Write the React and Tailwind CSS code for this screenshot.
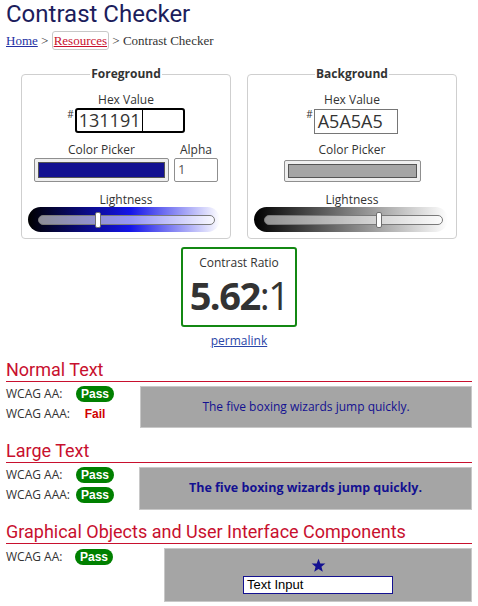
import React from 'react';

const FG = '#131191';

const Slider = ({ gradient, thumb, width }) => (
  <div className={`relative h-[25px] rounded-full ${width}`} style={{ background: gradient }}>
    <div className="absolute left-[10px] right-[5px] top-[8px] h-[10px] rounded-full border border-[#7a7a7a] bg-white/55" />
    <div
      className="absolute top-[5px] h-[16px] w-[6px] rounded-[2px] border border-[#6f6f6f] bg-white"
      style={{ left: thumb }}
    />
  </div>
);

const Badge = () => (
  <span className="inline-flex h-[16px] w-[38px] items-center justify-center rounded-full bg-[#008000] text-[12px] font-bold text-white font-['Liberation_Sans',Arial,sans-serif]">
    Pass
  </span>
);

const Fail = () => (
  <span className="inline-flex h-[16px] w-[38px] items-center justify-center text-[12px] font-bold text-[#d00000] font-['Liberation_Sans',Arial,sans-serif]">
    Fail
  </span>
);

const Heading = ({ children }) => (
  <div>
    <h2 className="h-[22px] font-['Roboto',sans-serif] text-[18px] leading-[22px] text-[#c8102e]">{children}</h2>
    <div className="h-px bg-[#c8102e]" />
  </div>
);

const Row = ({ label, children }) => (
  <div className="flex h-[16px] items-center">
    <span className="w-[70px] text-[12px] leading-[16px]">{label}</span>
    {children}
  </div>
);

export default function App() {
  return (
    <div className="h-[606px] w-[478px] overflow-hidden bg-white px-[6px] font-['Open_Sans',sans-serif] text-[#333]">
      {/* Title + breadcrumb */}
      <h1 className="font-['Roboto',sans-serif] text-[24px] leading-[28px] text-[#1c1d5c]">Contrast Checker</h1>
      <div className="mt-[4px] font-['Liberation_Serif',serif] text-[13px] leading-[18px] text-[#333]">
        <a className="text-[#2431a3] underline">Home</a>
        <span> &gt; </span>
        <span className="rounded-[3px] border border-[#c8c8c8] px-[1px] py-[1px]">
          <a className="text-[#c8102e] underline">Resources</a>
        </span>
        <span> &gt; Contrast Checker</span>
      </div>

      {/* Colour pickers */}
      <div className="mt-[16px] flex justify-center gap-[16px]">
        <fieldset className="h-[173px] w-[210px] rounded-[4px] border border-[#cfcfcf] px-[6px]">
          <legend className="mx-auto px-[1px] text-[12px] font-bold leading-[16px]">Foreground</legend>
          <div className="mt-[10px] text-center text-[12px] leading-[16px]">Hex Value</div>
          <div className="flex justify-center">
            <span className="mr-[1px] text-[10px] leading-[12px]">#</span>
            <div className="flex h-[25px] w-[110px] items-center rounded-[3px] border-2 border-black pl-[2px] text-[18px]">
              131191
              <span className="ml-[1px] h-[21px] w-[1px] bg-black" />
            </div>
          </div>
          <div className="mt-[9px] flex justify-center gap-[5px]">
            <div className="flex w-[135px] flex-col items-center">
              <span className="text-[12px] leading-[16px]">Color Picker</span>
              <div className="h-[24px] w-full rounded-[2px] border border-[#8f8f8f] bg-[#efefef] p-[3px]">
                <div className="h-full w-full border border-[#555]" style={{ background: FG }} />
              </div>
            </div>
            <div className="flex w-[44px] flex-col items-center">
              <span className="text-[12px] leading-[16px]">Alpha</span>
              <div className="flex h-[24px] w-full items-center rounded-[2px] border border-[#8f8f8f] pl-[3px] text-[13px] text-[#555]">
                1
              </div>
            </div>
          </div>
          <div className="mt-[10px] text-center text-[12px] leading-[16px]">Lightness</div>
          <div className="-mt-[1px] flex">
            <Slider
              width="w-[192px]"
              gradient="linear-gradient(to right, #000 0%, #1313e8 53%, #fff 100%)"
              thumb="67px"
            />
          </div>
        </fieldset>

        <fieldset className="h-[173px] w-[210px] rounded-[4px] border border-[#cfcfcf] px-[6px]">
          <legend className="mx-auto px-[1px] text-[12px] font-bold leading-[16px]">Background</legend>
          <div className="mt-[10px] text-center text-[12px] leading-[16px]">Hex Value</div>
          <div className="flex justify-center">
            <span className="mr-[1px] text-[10px] leading-[12px]">#</span>
            <div className="mt-[1px] flex h-[25px] w-[84px] items-center border border-[#767676] pl-[3px] text-[18px]">
              A5A5A5
            </div>
          </div>
          <div className="mt-[8px] flex justify-center">
            <div className="flex w-[137px] flex-col items-center">
              <span className="text-[12px] leading-[16px]">Color Picker</span>
              <div className="mt-[2px] h-[22px] w-full rounded-[2px] border border-[#8f8f8f] bg-[#efefef] p-[3px]">
                <div className="h-full w-full border border-[#555] bg-[#a5a5a5]" />
              </div>
            </div>
          </div>
          <div className="mt-[10px] text-center text-[12px] leading-[16px]">Lightness</div>
          <div className="-mt-[1px] flex">
            <Slider
              width="w-[194px]"
              gradient="linear-gradient(to right, #000 0%, #fff 100%)"
              thumb="122px"
            />
          </div>
        </fieldset>
      </div>

      {/* Contrast ratio */}
      <div className="mt-[8px] flex flex-col items-center">
        <div className="flex h-[80px] w-[116px] flex-col items-center rounded-[3px] border-2 border-[#138813] pt-[6px]">
          <span className="text-[12px] leading-[16px]">Contrast Ratio</span>
          <div className="mt-[4px] text-[38px] leading-[40px] tracking-[-1.5px] text-[#333]">
            <span className="font-bold">5.62</span>:1
          </div>
        </div>
        <a className="mt-[6px] text-[12px] leading-[16px] text-[#2a46a8] underline">permalink</a>
      </div>

      {/* Normal text */}
      <div className="mt-[10px]">
        <Heading>Normal Text</Heading>
        <div className="mt-[4px] flex">
          <div className="flex w-[134px] flex-col gap-[4px]">
            <Row label="WCAG AA:"><Badge /></Row>
            <Row label="WCAG AAA:"><Fail /></Row>
          </div>
          <div className="flex h-[42px] flex-1 items-center justify-center border border-[#c8c8c8] bg-[#a5a5a5] text-[12px] text-[#131191]">
            The five boxing wizards jump quickly.
          </div>
        </div>
      </div>

      {/* Large text */}
      <div className="mt-[12px]">
        <Heading>Large Text</Heading>
        <div className="mt-[4px] flex">
          <div className="flex w-[133px] flex-col gap-[4px]">
            <Row label="WCAG AA:"><Badge /></Row>
            <Row label="WCAG AAA:"><Badge /></Row>
          </div>
          <div className="flex h-[43px] flex-1 items-center justify-center border border-[#c8c8c8] bg-[#a5a5a5] text-[12.5px] font-bold text-[#131191]">
            The five boxing wizards jump quickly.
          </div>
        </div>
      </div>

      {/* Graphical objects */}
      <div className="mt-[11px]">
        <Heading>Graphical Objects and User Interface Components</Heading>
        <div className="mt-[4px] flex">
          <div className="flex w-[158px] flex-col">
            <div className="flex h-[17px] items-center">
              <span className="w-[69px] text-[12px] leading-[16px]">WCAG AA:</span>
              <Badge />
            </div>
          </div>
          <div className="flex h-[54px] flex-1 flex-col items-center border border-[#c8c8c8] bg-[#a5a5a5] pt-[9px]">
            <svg width="15" height="15" viewBox="0 0 24 24">
              <polygon
                points="12,1 14.9,8.6 23,8.9 16.7,14 18.9,22 12,17.5 5.1,22 7.3,14 1,8.9 9.1,8.6"
                fill={FG}
              />
            </svg>
            <div className="mt-[3px] flex h-[18px] w-[150px] items-center border border-[#131191] bg-white pl-[3px] font-['Liberation_Sans',Arial,sans-serif] text-[13px] text-black">
              Text Input
            </div>
          </div>
        </div>
      </div>
    </div>
  );
}
